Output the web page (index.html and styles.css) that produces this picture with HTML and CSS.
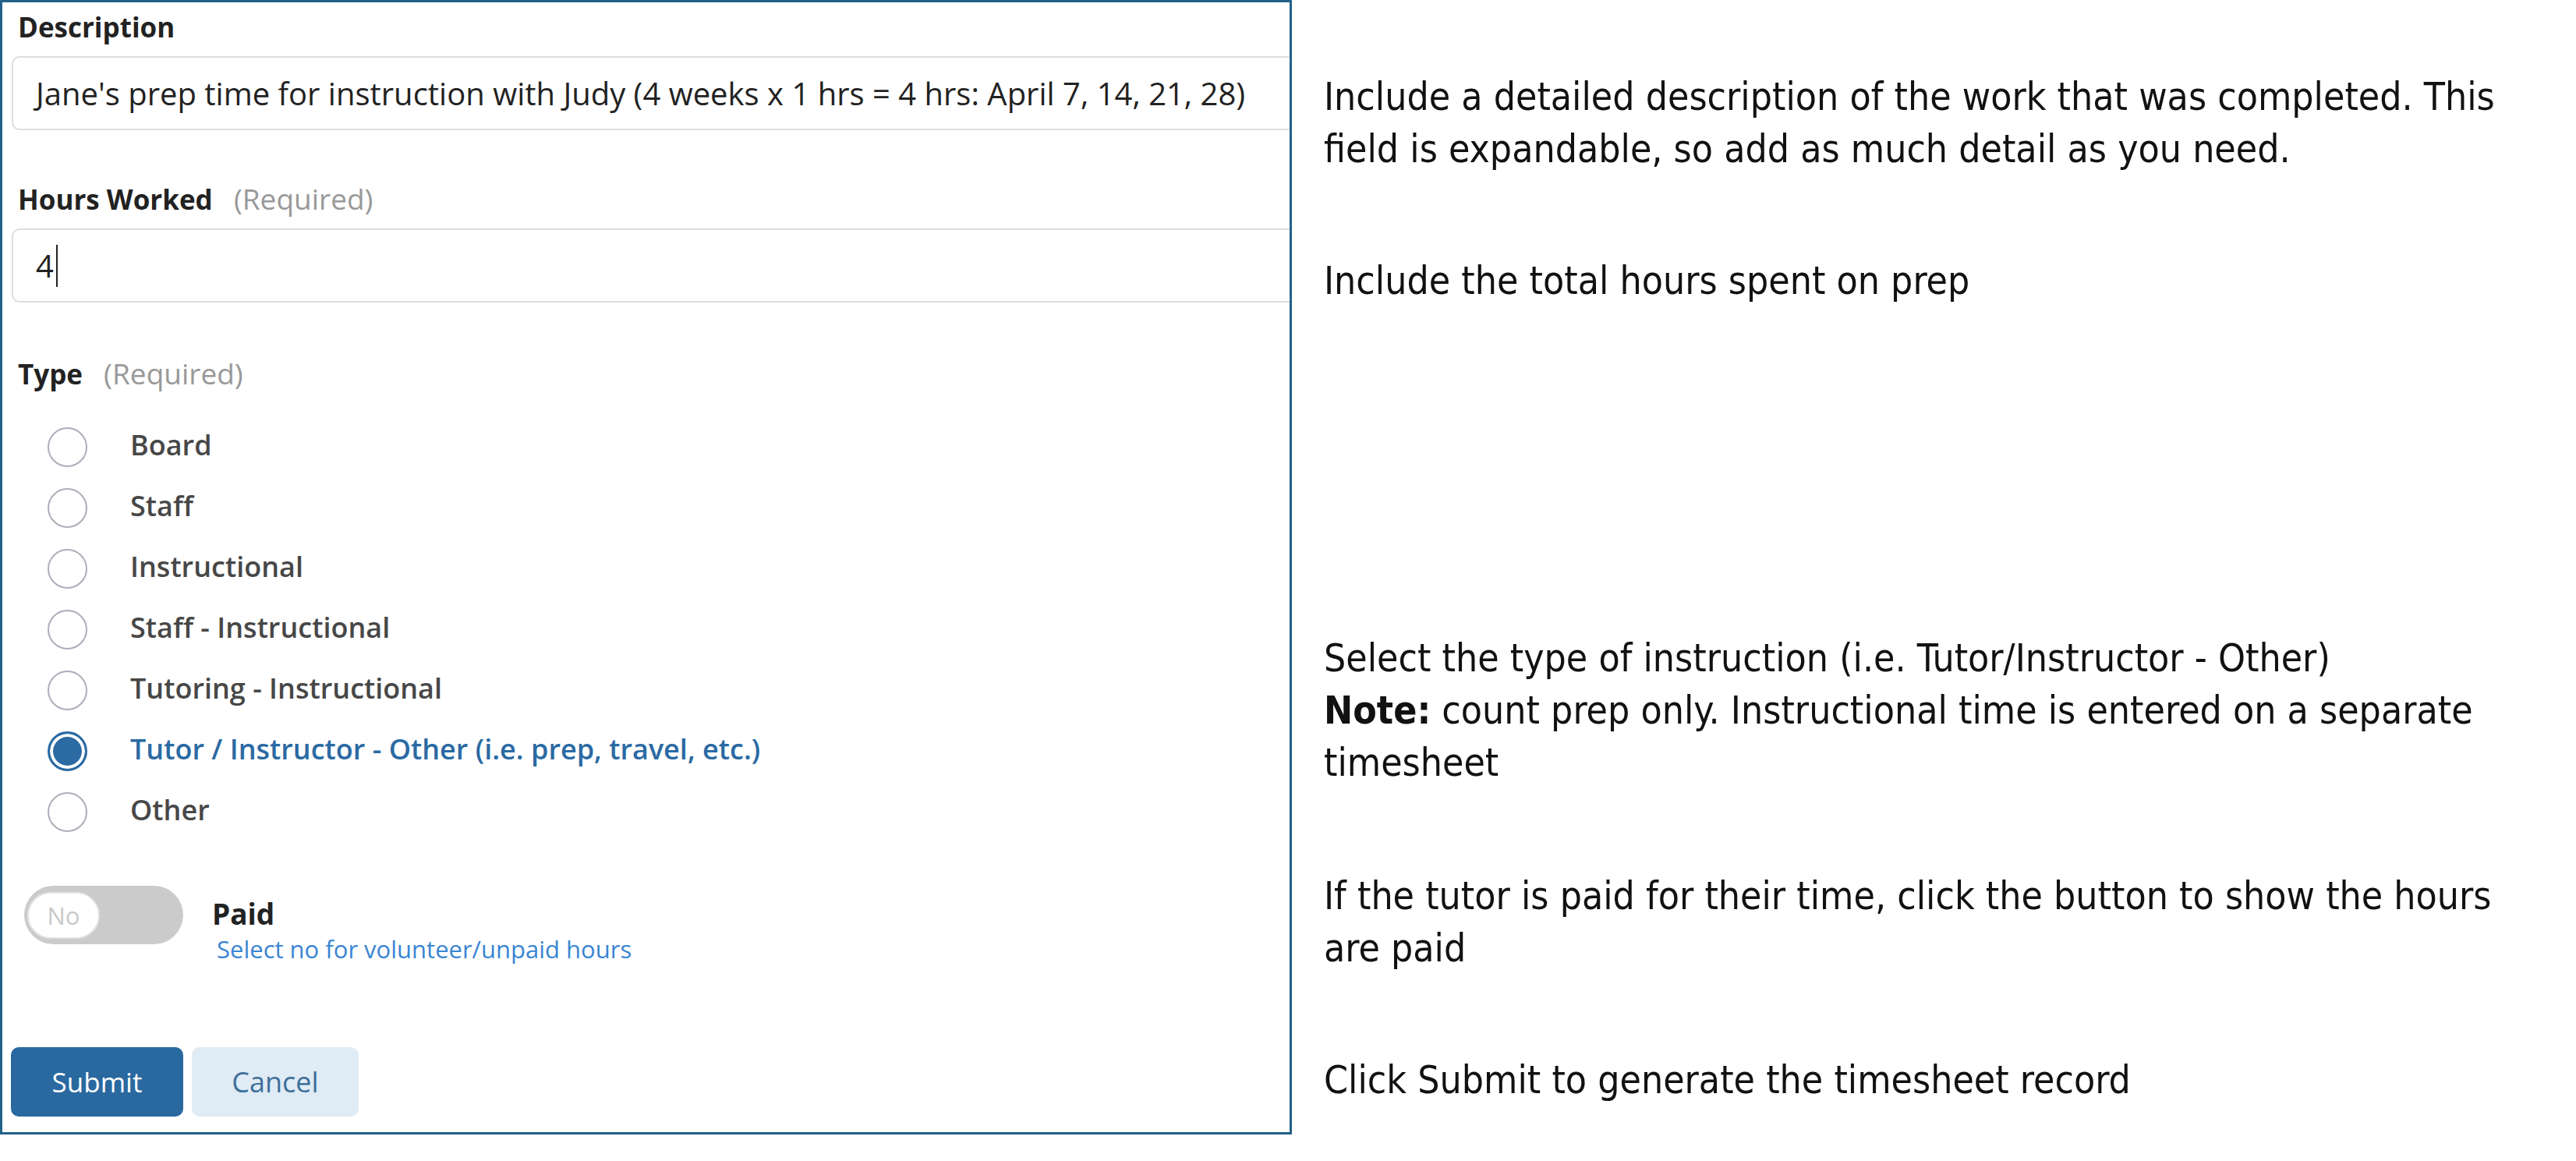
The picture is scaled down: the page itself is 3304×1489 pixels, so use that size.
FILE: index.html
```html
<!DOCTYPE html>
<html lang="en">
<head>
    <meta charset="UTF-8">
    <meta name="viewport" content="width=device-width, initial-scale=1.0">
    <title>Timesheet Entry Guide</title>
    <link rel="stylesheet" href="styles.css">
</head>
<body>
    <div class="page">
        <form class="panel">
            <div class="field">
                <div class="field-label">Description</div>
                <div class="text-input">Jane's prep time for instruction with Judy (4 weeks x 1 hrs = 4 hrs: April 7, 14, 21, 28)</div>
            </div>

            <div class="field field-hours">
                <div class="field-label">Hours Worked <span class="required">(Required)</span></div>
                <div class="text-input"><span class="caret">4</span></div>
            </div>

            <div class="field field-type">
                <div class="field-label">Type <span class="required">(Required)</span></div>
                <ul class="radio-list">
                    <li class="radio-row"><span class="radio"></span><span class="radio-text">Board</span></li>
                    <li class="radio-row"><span class="radio"></span><span class="radio-text">Staff</span></li>
                    <li class="radio-row"><span class="radio"></span><span class="radio-text">Instructional</span></li>
                    <li class="radio-row"><span class="radio"></span><span class="radio-text">Staff - Instructional</span></li>
                    <li class="radio-row"><span class="radio"></span><span class="radio-text">Tutoring - Instructional</span></li>
                    <li class="radio-row checked"><span class="radio"></span><span class="radio-text">Tutor / Instructor - Other (i.e. prep, travel, etc.)</span></li>
                    <li class="radio-row"><span class="radio"></span><span class="radio-text">Other</span></li>
                </ul>
            </div>

            <div class="paid-row">
                <div class="toggle"><span class="toggle-knob">No</span></div>
                <div class="paid-text">
                    <div class="paid-label">Paid</div>
                    <div class="paid-hint">Select no for volunteer/unpaid hours</div>
                </div>
            </div>

            <div class="actions">
                <button type="button" class="btn btn-submit">Submit</button>
                <button type="button" class="btn btn-cancel">Cancel</button>
            </div>
        </form>

        <div class="notes">
            <p class="note note-desc">Include a detailed description of the work that was completed. This<br>field is expandable, so add as much detail as you need.</p>
            <p class="note note-hours">Include the total hours spent on prep</p>
            <p class="note note-type">Select the type of instruction (i.e. Tutor/Instructor - Other)<br><b>Note:</b> count prep only. Instructional time is entered on a separate<br>timesheet</p>
            <p class="note note-paid">If the tutor is paid for their time, click the button to show the hours<br>are paid</p>
            <p class="note note-submit">Click Submit to generate the timesheet record</p>
        </div>
    </div>
</body>
</html>
```

FILE: styles.css
```css
body {
    margin: 0;
    background-color: white;
    font-family: "Open Sans", Arial, sans-serif;
}
.page {
    display: flex;
    align-items: flex-start;
    gap: 41px;
}
.panel {
    box-sizing: border-box;
    width: 1657px;
    height: 1455px;
    flex-shrink: 0;
    border: 3px solid #21618a;
    padding: 13px 0 0 12px;
    overflow: hidden;
}
.field-label {
    padding-left: 8px;
    font-size: 35px;
    line-height: 38px;
    font-weight: 700;
    color: #222;
}
.required {
    margin-left: 18px;
    font-size: 37px;
    font-weight: 400;
    color: #999;
}
.text-input {
    box-sizing: border-box;
    width: 1700px;
    height: 95px;
    margin-top: 18px;
    padding-left: 29px;
    border: 2px solid #dedede;
    border-radius: 10px;
    display: flex;
    align-items: center;
    font-size: 40px;
    color: #222;
    white-space: nowrap;
}
.caret {
    padding-right: 3px;
    border-right: 2px solid #222;
    line-height: 54px;
}
.field-hours {
    margin-top: 69px;
}
.field-type {
    margin-top: 72px;
}
.radio-list {
    list-style-type: none;
    margin: 35px 0 0;
    padding: 0;
}
.radio-row {
    height: 78px;
    display: flex;
    align-items: center;
}
.radio {
    box-sizing: border-box;
    width: 51px;
    height: 51px;
    margin-left: 46px;
    border: 2px solid #aeadbb;
    border-radius: 50%;
}
.radio-text {
    margin-left: 55px;
    padding-bottom: 6px;
    font-size: 36px;
    font-weight: 600;
    color: #474747;
}
.checked .radio {
    border: 3px solid #2b6aa3;
    background-color: #2b6aa3;
    box-shadow: inset 0 0 0 4px white;
}
.checked .radio-text {
    color: #2b6aa3;
}
.paid-row {
    margin-top: 56px;
    display: flex;
    align-items: flex-start;
}
.toggle {
    box-sizing: border-box;
    width: 204px;
    height: 75px;
    margin-left: 16px;
    padding: 8px 0 0 4px;
    border-radius: 38px;
    background-color: #cbcbcb;
}
.toggle-knob {
    box-sizing: border-box;
    display: flex;
    justify-content: center;
    align-items: center;
    width: 93px;
    height: 60px;
    border: 2px solid #e4e4e4;
    border-radius: 30px;
    background-color: white;
    font-size: 31px;
    color: #c8c8c8;
}
.paid-text {
    margin-left: 37px;
    padding-top: 16px;
}
.paid-label {
    font-size: 37px;
    line-height: 40px;
    font-weight: 700;
    color: #222;
}
.paid-hint {
    margin-top: 8px;
    margin-left: 6px;
    font-size: 31px;
    line-height: 34px;
    color: #3a85d3;
}
.actions {
    margin-top: 109px;
    display: flex;
    gap: 11px;
}
.btn {
    box-sizing: border-box;
    height: 89px;
    border: none;
    border-radius: 10px;
    font-family: "Open Sans", Arial, sans-serif;
    font-size: 35px;
    cursor: pointer;
}
.btn-submit {
    width: 221px;
    margin-left: -1px;
    background-color: #2a699f;
    color: white;
}
.btn-cancel {
    width: 214px;
    background-color: #dfebf5;
    color: #3e6f9a;
    font-size: 36px;
}
.notes {
    padding-top: 91px;
    font-family: "DejaVu Sans Condensed", "DejaVu Sans", sans-serif;
    font-stretch: condensed;
    font-size: 49.5px;
    line-height: 67px;
    color: #111;
    white-space: nowrap;
}
.note {
    margin: 0;
}
.note-hours {
    margin-top: 102px;
}
.note-type {
    margin-top: 417px;
}
.note-paid {
    margin-top: 104px;
}
.note-submit {
    margin-top: 102px;
}
```
